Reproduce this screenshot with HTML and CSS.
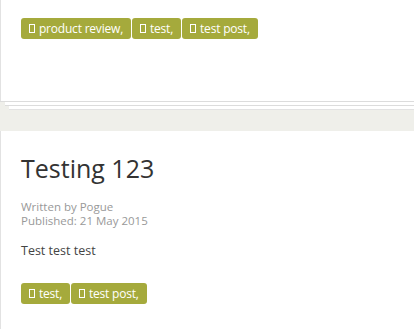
FILE: index.html
```html
<!DOCTYPE html>
<html lang="en">
<head>
    <meta charset="UTF-8">
    <meta name="viewport" content="width=device-width, initial-scale=1.0">
    <title>Blog</title>
    <link rel="stylesheet" href="styles.css">
</head>
<body>
    <div class="item">
        <div class="tags">
            <a class="tag" href="#"><span class="tag-icon"></span> product review,</a>
            <a class="tag" href="#"><span class="tag-icon"></span> test,</a>
            <a class="tag" href="#"><span class="tag-icon"></span> test post,</a>
        </div>
    </div>

    <div class="item item-second">
        <h2 class="item-title">Testing 123</h2>
        <div class="item-info">
            <div>Written by Pogue</div>
            <div>Published: 21 May 2015</div>
        </div>
        <p class="item-text">Test test test</p>
        <div class="tags">
            <a class="tag" href="#"><span class="tag-icon"></span> test,</a>
            <a class="tag" href="#"><span class="tag-icon"></span> test post,</a>
        </div>
    </div>
</body>
</html>
```

FILE: styles.css
```css
* {
    margin: 0;
    padding: 0;
    box-sizing: border-box;
}

body {
    font-family: 'Open Sans', sans-serif;
    background: #efefea;
    overflow: hidden;
    color: #444;
}

.item {
    width: calc(100% + 20px);
    background: #fff;
    border-left: 1px solid #e2e2e2;
    padding: 18px 0 62px 20px;
    box-shadow: 0 1px 0 #dcdcdc,
                5px 4px 0 #fff,
                5px 5px 0 #dcdcdc,
                9px 8px 0 #fff,
                9px 9px 0 #e2e2e2;
}

.item-second {
    margin-top: 30px;
    padding-top: 23px;
    padding-bottom: 60px;
    box-shadow: none;
}

.tags {
    display: flex;
    gap: 1px;
}

.tag {
    display: inline-flex;
    align-items: center;
    height: 21px;
    padding: 0 8px;
    background: #a5aa3c;
    border-radius: 3px;
    color: #fff;
    font-size: 12px;
    letter-spacing: -0.2px;
    text-decoration: none;
    white-space: pre;
}

.tag-icon {
    display: inline-block;
    width: 6px;
    height: 9px;
    margin-right: 1px;
    border: 1px solid #fff;
}

.item-title {
    font-size: 25px;
    font-weight: normal;
    line-height: 29px;
    color: #333;
}

.item-info {
    margin-top: 17px;
    font-size: 11.5px;
    line-height: 14px;
    color: #999;
}

.item-text {
    margin-top: 14px;
    font-size: 12.5px;
    line-height: 18px;
    margin-bottom: 23px;
}
```
